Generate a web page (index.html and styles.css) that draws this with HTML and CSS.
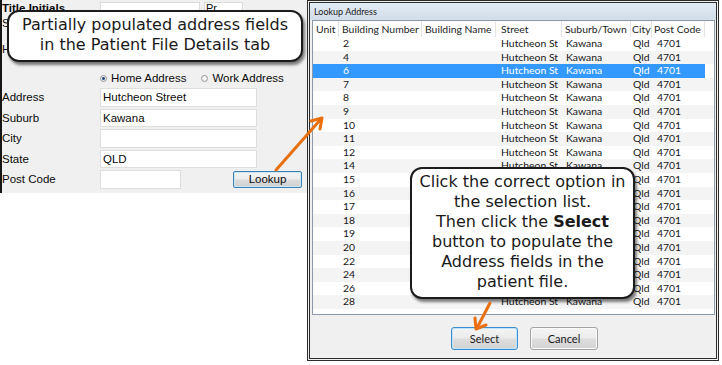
FILE: index.html
```html
<!DOCTYPE html>
<html>
<head>
<meta charset="utf-8">
<title>Lookup Address</title>
<link rel="stylesheet" href="styles.css">
</head>
<body>
<div class="page">
  <div class="left">
    <div class="panel">
      <div class="hrow first"><span class="lbl bold">Title Initials</span><span class="box wide"></span><span class="box small">Pr</span></div>
      <div class="hrow"><span class="lbl">Surname</span></div>
      <div class="hrow third"><span class="lbl">Home Phone</span></div>
      <div class="radios">
        <span class="radio on"></span><span class="rtext">Home Address</span>
        <span class="radio second"></span><span class="rtext">Work Address</span>
      </div>
      <div class="frow"><span class="lbl">Address</span><span class="inp">Hutcheon Street</span></div>
      <div class="frow"><span class="lbl">Suburb</span><span class="inp">Kawana</span></div>
      <div class="frow"><span class="lbl">City</span><span class="inp"></span></div>
      <div class="frow"><span class="lbl">State</span><span class="inp">QLD</span></div>
      <div class="frow"><span class="lbl">Post Code</span><span class="inp short"></span><span class="lookup">Lookup</span></div>
    </div>
  </div>

  <div class="dialog">
    <div class="titlebar">Lookup Address</div>
    <div class="list">
      <div class="row hdr"><span>Unit</span><span>Building Number</span><span>Building Name</span><span>Street</span><span>Suburb/Town</span><span>City</span><span>Post Code</span><span></span></div>
      <div class="row"><span></span><span>2</span><span></span><span>Hutcheon St</span><span>Kawana</span><span>Qld</span><span>4701</span><span></span></div>
      <div class="row"><span></span><span>4</span><span></span><span>Hutcheon St</span><span>Kawana</span><span>Qld</span><span>4701</span><span></span></div>
      <div class="row sel"><span></span><span>6</span><span></span><span>Hutcheon St</span><span>Kawana</span><span>Qld</span><span>4701</span><span></span></div>
      <div class="row"><span></span><span>7</span><span></span><span>Hutcheon St</span><span>Kawana</span><span>Qld</span><span>4701</span><span></span></div>
      <div class="row"><span></span><span>8</span><span></span><span>Hutcheon St</span><span>Kawana</span><span>Qld</span><span>4701</span><span></span></div>
      <div class="row"><span></span><span>9</span><span></span><span>Hutcheon St</span><span>Kawana</span><span>Qld</span><span>4701</span><span></span></div>
      <div class="row"><span></span><span>10</span><span></span><span>Hutcheon St</span><span>Kawana</span><span>Qld</span><span>4701</span><span></span></div>
      <div class="row"><span></span><span>11</span><span></span><span>Hutcheon St</span><span>Kawana</span><span>Qld</span><span>4701</span><span></span></div>
      <div class="row"><span></span><span>12</span><span></span><span>Hutcheon St</span><span>Kawana</span><span>Qld</span><span>4701</span><span></span></div>
      <div class="row"><span></span><span>14</span><span></span><span>Hutcheon St</span><span>Kawana</span><span>Qld</span><span>4701</span><span></span></div>
      <div class="row"><span></span><span>15</span><span></span><span>Hutcheon St</span><span>Kawana</span><span>Qld</span><span>4701</span><span></span></div>
      <div class="row"><span></span><span>16</span><span></span><span>Hutcheon St</span><span>Kawana</span><span>Qld</span><span>4701</span><span></span></div>
      <div class="row"><span></span><span>17</span><span></span><span>Hutcheon St</span><span>Kawana</span><span>Qld</span><span>4701</span><span></span></div>
      <div class="row"><span></span><span>18</span><span></span><span>Hutcheon St</span><span>Kawana</span><span>Qld</span><span>4701</span><span></span></div>
      <div class="row"><span></span><span>19</span><span></span><span>Hutcheon St</span><span>Kawana</span><span>Qld</span><span>4701</span><span></span></div>
      <div class="row"><span></span><span>20</span><span></span><span>Hutcheon St</span><span>Kawana</span><span>Qld</span><span>4701</span><span></span></div>
      <div class="row"><span></span><span>22</span><span></span><span>Hutcheon St</span><span>Kawana</span><span>Qld</span><span>4701</span><span></span></div>
      <div class="row"><span></span><span>24</span><span></span><span>Hutcheon St</span><span>Kawana</span><span>Qld</span><span>4701</span><span></span></div>
      <div class="row"><span></span><span>26</span><span></span><span>Hutcheon St</span><span>Kawana</span><span>Qld</span><span>4701</span><span></span></div>
      <div class="row"><span></span><span>28</span><span></span><span>Hutcheon St</span><span>Kawana</span><span>Qld</span><span>4701</span><span></span></div>
    </div>
    <div class="actions">
      <span class="wbtn default">Select</span>
      <span class="wbtn">Cancel</span>
    </div>
  </div>

  <div class="callout c1"><div class="ctext">Partially populated address fields<br>in the Patient File Details tab</div></div>
  <div class="callout c2"><div class="ctext">Click the correct option in<br>the selection list.<br>Then click the <b>Select</b><br>button to populate the<br>Address fields in the<br>patient file.</div></div>

  <svg class="arrows" width="722" height="365" viewBox="0 0 722 365">
    <g fill="none" stroke="#e8700e" stroke-width="3" stroke-linecap="round" stroke-linejoin="round">
      <path d="M276 170 L321 119"/>
      <path d="M311 121 L322 118 L320 129"/>
      <path d="M490 303 L477 328"/>
      <path d="M475 318 L476 329 L486 325"/>
    </g>
  </svg>
</div>
</body>
</html>
```

FILE: styles.css
```css
* { box-sizing: border-box; }
html, body { margin: 0; padding: 0; background: #ffffff; }

.page {
  position: relative;
  width: 722px;
  height: 365px;
  display: flex;
  overflow: hidden;
  background: #ffffff;
}

/* ---------- left form ---------- */
.left { width: 307px; flex: none; }
.panel {
  height: 193px;
  background: #f0f0f0;
  border-left: 2px solid #161616;
  font-family: "Liberation Sans", Arial, sans-serif;
  font-size: 11.5px;
  color: #0a0a0a;
  display: flex;
  flex-direction: column;
  overflow: hidden;
}
.hrow { height: 16px; display: flex; align-items: center; flex: none; }
.hrow.first { height: 14px; margin-top: 1px; }
.hrow.third { margin-top: 10px; }
.lbl { width: 98px; flex: none; white-space: nowrap; }
.bold { font-weight: bold; }
.box { background: #fff; border: 1px solid #dadada; height: 13px; font-size: 11px; line-height: 11px; padding-left: 1px; }
.box.wide { width: 100px; }
.box.small { width: 39px; margin-left: 4px; }

.radios {
  margin-top: 11px;
  height: 20px;
  display: flex;
  align-items: center;
  padding-left: 98px;
  flex: none;
}
.radio {
  width: 7px; height: 7px; border-radius: 50%;
  border: 1px solid #9a9a9a;
  background: radial-gradient(circle, #ffffff 0, #e6e6e6 100%);
  flex: none;
}
.radio.on { background: radial-gradient(circle, #2a4f7a 0, #2a4f7a 35%, #e9e9e9 45%); }
.radio.second { margin-left: 15px; }
.rtext { margin-left: 4px; }

.frow {
  height: 18.5px;
  margin-top: 2px;
  display: flex;
  align-items: center;
  flex: none;
}
.radios + .frow { margin-top: 0; }
.inp {
  width: 157px;
  height: 18.5px;
  background: #ffffff;
  border: 1px solid #dedede;
  padding-left: 2px;
  line-height: 16.5px;
  flex: none;
}
.inp.short { width: 81px; }
.lookup {
  margin-left: 52px;
  width: 69px;
  height: 17px;
  border: 1px solid #3c7fb1;
  border-radius: 2px;
  background: linear-gradient(#f4f4f4 0%, #ececec 48%, #dcdcdc 52%, #d0d0d0 100%);
  box-shadow: inset 0 0 0 1px #c8e6f8;
  text-align: center;
  line-height: 15px;
  flex: none;
}

/* ---------- dialog ---------- */
.dialog {
  width: 412px;
  height: 361px;
  flex: none;
  border: 3px double #2c2c2c;
  background: #f0f0f0;
  display: flex;
  flex-direction: column;
  font-family: Lato, "Open Sans", sans-serif;
  color: #161616;
}
.titlebar {
  height: 17px;
  flex: none;
  background: linear-gradient(#e3ebf4, #d1ddea);
  font-size: 9px;
  line-height: 17px;
  padding-left: 4px;
  color: #1a1a1a;
}
.list {
  margin: 0 1px 0 2px;
  height: 295px;
  flex: none;
  border: 1px solid #8c9aa8;
  background: #ffffff;
  overflow: hidden;
}
.row {
  display: grid;
  grid-template-columns: 26px 83px 74px 66px 69px 21px 53px 1fr;
  height: 13.6px;
  line-height: 13.6px;
  font-size: 10.4px;
  white-space: nowrap;
}
.row > span { padding-left: 4px; overflow: hidden; }
.row > span:nth-child(4) { padding-left: 5px; }
.row > span:nth-child(6) { padding-left: 2px; }
.row > span:nth-child(7) { padding-left: 5px; }
.row:nth-child(odd) { background: #f4f4f4; }
.row.hdr {
  height: 16px;
  line-height: 16px;
  font-size: 10.4px;
  background: #ffffff;
  color: #1e1e1e;
}
.row.hdr > span { border-right: 1px solid #e3e3e3; padding-left: 3px; }
.row.hdr > span:nth-child(4) { padding-left: 5px; }
.row.hdr > span:nth-child(6) { padding-left: 1px; }
.row.hdr > span:nth-child(7) { padding-left: 2px; }
.row.hdr > span:last-child { border-right: none; }
.row.sel > span:not(:last-child) { background: #3399ff; color: #ffffff; }

.actions {
  flex: 1;
  display: flex;
  align-items: flex-start;
  gap: 12px;
  padding: 12px 0 0 141px;
}
.wbtn {
  width: 68px;
  height: 23px;
  border: 1px solid #a3a3a3;
  border-radius: 3px;
  background: linear-gradient(#f4f4f4 0%, #ececec 48%, #dedede 52%, #d3d3d3 100%);
  box-shadow: inset 0 0 0 1px #fafafa;
  font-size: 11px;
  line-height: 21px;
  text-align: center;
  color: #1a1a1a;
}
.wbtn.default {
  width: 67px;
  border-color: #3d8ed0;
  box-shadow: inset 0 0 0 1px #bfe3f8;
}

/* ---------- callouts ---------- */
.callout {
  position: absolute;
  background: #ffffff;
  border: 2px solid #1c1c1c;
  border-radius: 12px;
  box-shadow: 2px 3px 3px rgba(0, 0, 0, 0.5);
  font-family: "DejaVu Sans", Verdana, sans-serif;
  font-size: 16px;
  line-height: 20px;
  color: #1a1a1a;
  text-align: center;
  display: flex;
  align-items: center;
  justify-content: center;
}
.ctext { white-space: nowrap; }
.c1 { left: 7px; top: 10px; width: 296px; height: 52px; padding-bottom: 3px; }
.c2 { left: 410px; top: 167px; width: 225px; height: 132px; padding-bottom: 3px; }

.arrows { position: absolute; left: 0; top: 0; pointer-events: none; }
```
